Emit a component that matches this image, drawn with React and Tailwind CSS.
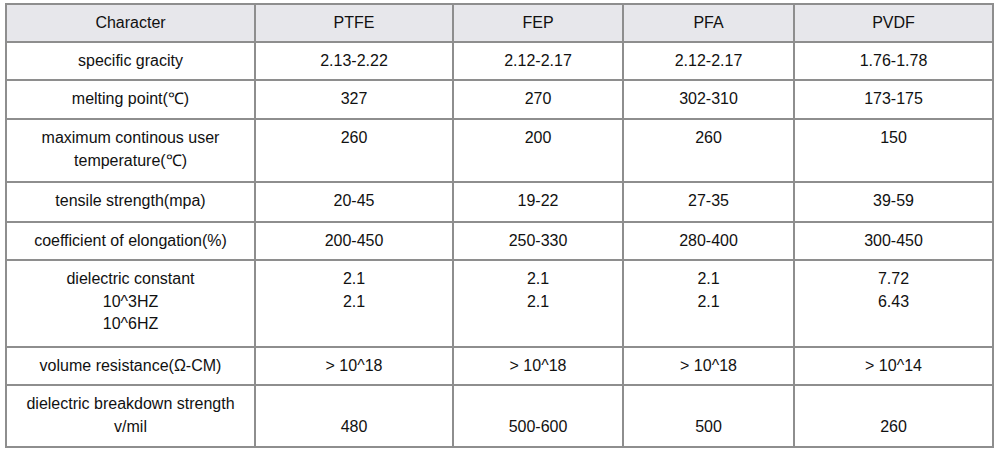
import React from 'react';

const columns = ['Character', 'PTFE', 'FEP', 'PFA', 'PVDF'];
const widths = ['w-[249px]', 'w-[198px]', 'w-[170px]', 'w-[171px]', 'w-[199px]'];

// each row: label lines, value lines per column, row height
const rows = [
  { label: ['specific gracity'], values: ['2.13-2.22', '2.12-2.17', '2.12-2.17', '1.76-1.78'], h: 'h-[38px]' },
  { label: ['melting point(℃)'], values: ['327', '270', '302-310', '173-175'], h: 'h-[39px]' },
  { label: ['maximum continous user', 'temperature(℃)'], values: ['260', '200', '260', '150'], h: 'h-[63px]' },
  { label: ['tensile strength(mpa)'], values: ['20-45', '19-22', '27-35', '39-59'], h: 'h-[40px]' },
  { label: ['coefficient of elongation(%)'], values: ['200-450', '250-330', '280-400', '300-450'], h: 'h-[38px]' },
  {
    label: ['dielectric constant', '10^3HZ', '10^6HZ'],
    values: [['2.1', '2.1'], ['2.1', '2.1'], ['2.1', '2.1'], ['7.72', '6.43']],
    h: 'h-[87px]',
  },
  { label: ['volume resistance(Ω-CM)'], values: ['> 10^18', '> 10^18', '> 10^18', '> 10^14'], h: 'h-[38px]' },
  {
    label: ['dielectric breakdown strength', 'v/mil'],
    values: [['\u00a0', '480'], ['\u00a0', '500-600'], ['\u00a0', '500'], ['\u00a0', '260']],
    h: 'h-[62px]',
  },
];

const Lines = ({ lines }) => {
  const list = Array.isArray(lines) ? lines : [lines];
  return list.map((l, i) => <div key={i}>{l}</div>);
};

export default function App() {
  return (
    <div className="w-[1000px] h-[454px] bg-white overflow-hidden pt-[3px] pl-[5px] font-['Liberation_Sans',Arial,sans-serif] text-[16px] leading-[22.5px] text-[#111]">
      <table className="table-fixed border-collapse w-[989px]">
        <colgroup>
          {widths.map((w, i) => <col key={i} className={w} />)}
        </colgroup>
        <thead>
          <tr className="h-[38px] bg-[#e7e7eb]">
            {columns.map(c => (
              <th key={c} className="border-2 border-[#8e8e8e] font-normal text-center align-top pt-[7px]">
                {c}
              </th>
            ))}
          </tr>
        </thead>
        <tbody>
          {rows.map((row, idx) => (
            <tr key={idx} className={row.h}>
              <td className="border-2 border-[#8e8e8e] text-center align-top pt-[7px]">
                <Lines lines={row.label} />
              </td>
              {row.values.map((v, i) => (
                <td key={i} className="border-2 border-[#8e8e8e] text-center align-top pt-[7px]">
                  <Lines lines={v} />
                </td>
              ))}
            </tr>
          ))}
        </tbody>
      </table>
    </div>
  );
}
